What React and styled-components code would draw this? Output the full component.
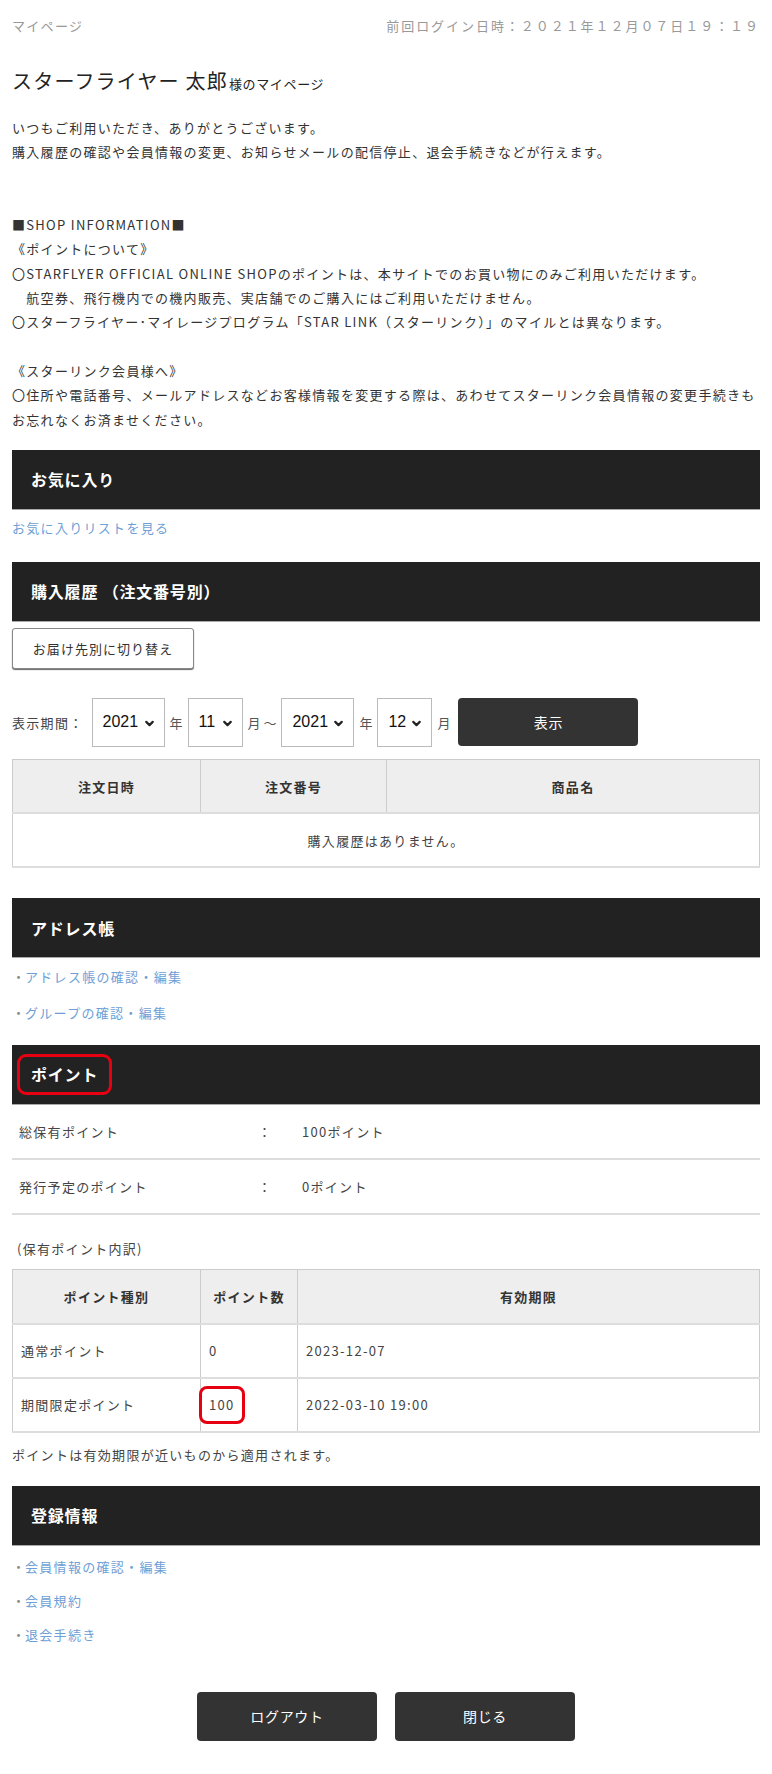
import React from 'react';
import styled, { createGlobalStyle } from 'styled-components';
import { ChevronDown } from 'lucide-react';

const GlobalStyle = createGlobalStyle`
  html, body {
    margin: 0;
    padding: 0;
    background: #fff;
  }
  body {
    font-family: "Noto Sans CJK JP", "Noto Sans", sans-serif;
    font-size: 13px;
    color: #333;
    letter-spacing: 0.1em;
  }
  * { box-sizing: border-box; }
`;

const Page = styled.div`
  width: 772px;
  padding: 16px 12px 35px;
`;

const TopBar = styled.div`
  display: flex;
  justify-content: space-between;
  line-height: 20px;
  color: #999;
  font-size: 13px;
`;

const LastLogin = styled.span`
  letter-spacing: 0.15em;
`;

const Name = styled.h1`
  margin: 30px 0 0;
  font-size: 20px;
  line-height: 30px;
  font-weight: 400;
  letter-spacing: 0.06em;
  color: #222;
`;

const NameSuffix = styled.span`
  font-size: 13px;
  letter-spacing: 0.05em;
  margin-left: 1px;
`;

const Intro = styled.p`
  margin: 17px 0 0;
  line-height: 24.3px;
`;

const Band = styled.h2`
  margin: ${p => p.$top}px 0 0;
  height: 60px;
  display: flex;
  align-items: center;
  padding-left: 19px;
  background: #222;
  border-bottom: 1px solid #aaa;
  color: #fff;
  font-size: 16px;
  font-weight: 700;
  letter-spacing: 0.05em;
`;

const Marked = styled.span`
  display: inline-block;
  margin-left: -14px;
  padding: 7px 11px 8px;
  border: 3px solid #e60012;
  border-radius: 9px;
  line-height: 20px;
`;

const LinkLine = styled.a`
  display: block;
  margin-top: ${p => p.$top || 0}px;
  line-height: ${p => p.$h || 24}px;
  color: #6e9fd6;
  text-decoration: none;
`;

const LinkList = styled.ul`
  list-style: none;
  margin: ${p => p.$top}px 0 0;
  padding: 0;
`;

const LinkItem = styled.li`
  line-height: ${p => p.$h}px;
  color: #6e9fd6;
  &:before {
    content: '・';
    color: #888;
    letter-spacing: 0;
  }
`;

const ToggleButton = styled.button`
  margin-top: 6px;
  width: 182px;
  height: 41px;
  background: #fff;
  border: 1px solid #888;
  border-radius: 3px;
  box-shadow: 0 1px 1px #666;
  font-family: inherit;
  font-size: 13px;
  letter-spacing: 0.08em;
  color: #333;
`;

const FilterRow = styled.div`
  margin-top: 29px;
  display: flex;
  align-items: center;
  gap: 5px;
`;

const FilterLabel = styled.span`
  margin-right: 3px;
  color: #444;
`;

const SelectBox = styled.div`
  position: relative;
  width: ${p => p.$w}px;
  height: 49px;
  border: 1px solid #bbb;
  display: flex;
  align-items: center;
  padding-left: 10px;
  font-family: "Liberation Sans", Arial, sans-serif;
  font-size: 16px;
  letter-spacing: 0;
  color: #111;
  svg {
    position: absolute;
    right: 8px;
    top: 18px;
  }
`;

const Unit = styled.span`
  color: #555;
  letter-spacing: 0;
`;

const DarkButton = styled.button`
  width: ${p => p.$w || 180}px;
  height: ${p => p.$h || 49}px;
  margin-left: ${p => p.$ml || 0}px;
  background: #333;
  color: #fff;
  border: none;
  border-radius: 4px;
  font-family: inherit;
  font-size: 14px;
  letter-spacing: 0.05em;
`;

const Table = styled.table`
  margin-top: ${p => p.$top}px;
  width: 100%;
  border-collapse: collapse;
  table-layout: fixed;
  border: 1px solid #ccc;
  border-bottom: 2px solid #d8d8d8;
`;

const Th = styled.th`
  height: 54px;
  background: #eee;
  border-right: 1px solid #ccc;
  border-bottom: 2px solid #ddd;
  font-size: 13px;
  font-weight: 700;
  color: #333;
  text-align: center;
  padding: 0;
`;

const Td = styled.td`
  height: 54px;
  border-right: 1px solid #ccc;
  border-bottom: 2px solid #ddd;
  text-align: ${p => (p.$center ? 'center' : 'left')};
  padding: 0 8px;
  color: #444;
`;

const NumMark = styled.span`
  display: inline-block;
  margin-left: -10px;
  padding: 6px 7px;
  border: 3px solid #e60012;
  border-radius: 8px;
  line-height: 20px;
`;

const InfoRow = styled.div`
  display: grid;
  grid-template-columns: 239px 44px 1fr;
  align-items: center;
  height: 55px;
  padding-left: 7px;
  border-bottom: 2px solid #ddd;
  color: #444;
`;

const Caption = styled.p`
  margin: ${p => p.$top}px 0 0;
  padding-left: ${p => p.$pl || 0}px;
  line-height: 24px;
  color: #444;
`;

const Footer = styled.div`
  margin-top: 40px;
  display: flex;
  justify-content: center;
  gap: 18px;
`;

const Select = ({ value, w }) => (
  <SelectBox $w={w}>
    {value}
    <ChevronDown size={13} strokeWidth={4} color="#222" />
  </SelectBox>
);

export default function App() {
  return (
    <Page>
      <GlobalStyle />
      <TopBar>
        <span>マイページ</span>
        <LastLogin>前回ログイン日時：２０２１年１２月０７日１９：１９</LastLogin>
      </TopBar>

      <Name>
        スターフライヤー 太郎<NameSuffix>様のマイページ</NameSuffix>
      </Name>

      <Intro>
        いつもご利用いただき、ありがとうございます。<br />
        購入履歴の確認や会員情報の変更、お知らせメールの配信停止、退会手続きなどが行えます。<br />
        <br />
        <br />
        ■SHOP INFORMATION■<br />
        《ポイントについて》<br />
        〇STARFLYER OFFICIAL ONLINE SHOPのポイントは、本サイトでのお買い物にのみご利用いただけます。<br />
        {'\u3000'}航空券、飛行機内での機内販売、実店舗でのご購入にはご利用いただけません。<br />
        〇スターフライヤー･マイレージプログラム「STAR LINK（スターリンク）」のマイルとは異なります。<br />
        <br />
        《スターリンク会員様へ》<br />
        〇住所や電話番号、メールアドレスなどお客様情報を変更する際は、あわせてスターリンク会員情報の変更手続きも<br />
        お忘れなくお済ませください。
      </Intro>

      <Band $top={18}>お気に入り</Band>
      <LinkLine $top={6} href="#">お気に入りリストを見る</LinkLine>

      <Band $top={22}>購入履歴 （注文番号別）</Band>
      <ToggleButton>お届け先別に切り替え</ToggleButton>

      <FilterRow>
        <FilterLabel>表示期間：</FilterLabel>
        <Select value="2021" w={73} />
        <Unit>年</Unit>
        <Select value="11" w={55} />
        <Unit>月 ～</Unit>
        <Select value="2021" w={73} />
        <Unit>年</Unit>
        <Select value="12" w={55} />
        <Unit>月</Unit>
        <DarkButton $w={180} $h={48} $ml={3}>表示</DarkButton>
      </FilterRow>

      <Table $top={12}>
        <colgroup>
          <col style={{ width: 188 }} />
          <col style={{ width: 186 }} />
          <col />
        </colgroup>
        <thead>
          <tr>
            <Th>注文日時</Th>
            <Th>注文番号</Th>
            <Th>商品名</Th>
          </tr>
        </thead>
        <tbody>
          <tr>
            <Td colSpan={3} $center>購入履歴はありません。</Td>
          </tr>
        </tbody>
      </Table>

      <Band $top={30}>アドレス帳</Band>
      <LinkList $top={1}>
        <LinkItem $h={36}>アドレス帳の確認・編集</LinkItem>
        <LinkItem $h={36}>グループの確認・編集</LinkItem>
      </LinkList>

      <Band $top={14}>
        <Marked>ポイント</Marked>
      </Band>
      <InfoRow>
        <span>総保有ポイント</span>
        <span>：</span>
        <span>100ポイント</span>
      </InfoRow>
      <InfoRow>
        <span>発行予定のポイント</span>
        <span>：</span>
        <span>0ポイント</span>
      </InfoRow>

      <Caption $top={22} $pl={5}>(保有ポイント内訳)</Caption>

      <Table $top={8}>
        <colgroup>
          <col style={{ width: 188 }} />
          <col style={{ width: 97 }} />
          <col />
        </colgroup>
        <thead>
          <tr>
            <Th>ポイント種別</Th>
            <Th>ポイント数</Th>
            <Th>有効期限</Th>
          </tr>
        </thead>
        <tbody>
          <tr>
            <Td>通常ポイント</Td>
            <Td>0</Td>
            <Td>2023-12-07</Td>
          </tr>
          <tr>
            <Td>期間限定ポイント</Td>
            <Td>
              <NumMark>100</NumMark>
            </Td>
            <Td>2022-03-10 19:00</Td>
          </tr>
        </tbody>
      </Table>

      <Caption $top={10}>ポイントは有効期限が近いものから適用されます。</Caption>

      <Band $top={19}>登録情報</Band>
      <LinkList $top={4}>
        <LinkItem $h={34}>会員情報の確認・編集</LinkItem>
        <LinkItem $h={34}>会員規約</LinkItem>
        <LinkItem $h={34}>退会手続き</LinkItem>
      </LinkList>

      <Footer>
        <DarkButton>ログアウト</DarkButton>
        <DarkButton>閉じる</DarkButton>
      </Footer>
    </Page>
  );
}
